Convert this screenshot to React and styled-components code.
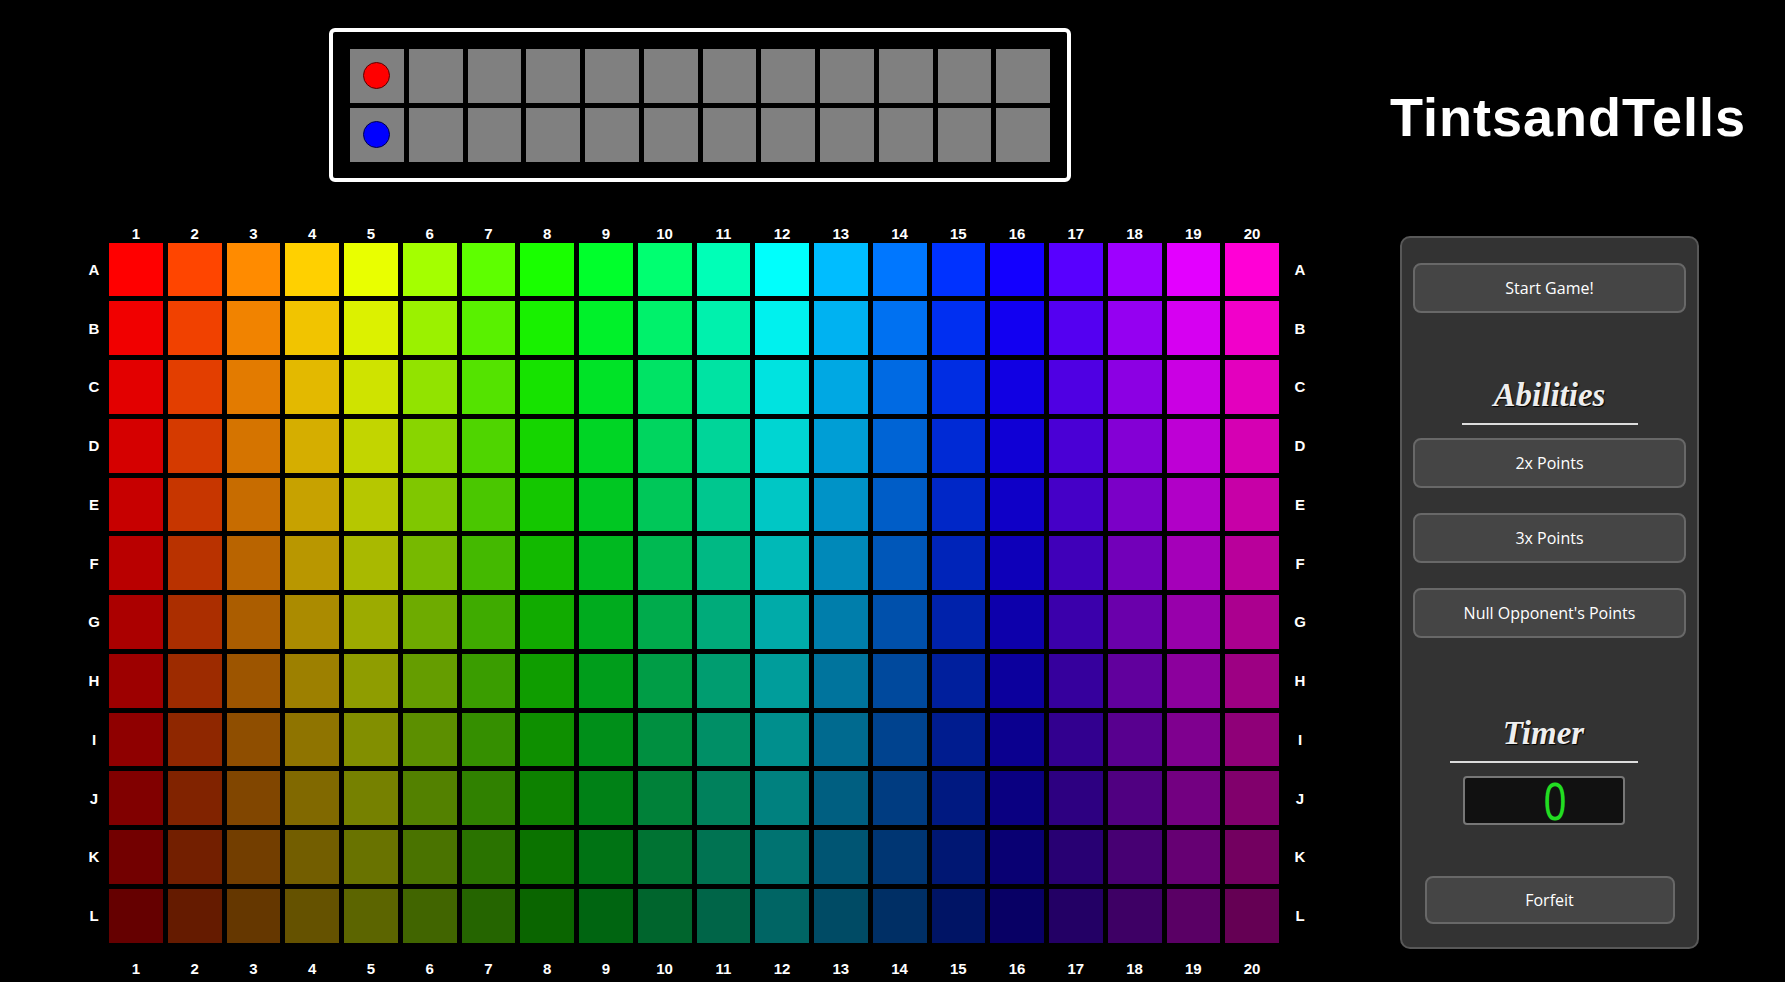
import React from "react";
import styled, { createGlobalStyle } from "styled-components";

const ROWS = "ABCDEFGHIJKL".split("");
const COLS = Array.from({ length: 20 }, (_, i) => i + 1);
const SLOTS = Array.from({ length: 11 }, (_, i) => i);

// hue walks the wheel across columns, each row gets a little darker
const tint = (row, col) => {
  const hue = (col - 1) * 16.3;
  const value = 1 - row * 0.055;
  return `hsl(${hue}, 100%, ${value * 50}%)`;
};

const App = () => {
  return (
    <>
      <GlobalStyle />
      <Page>
        <Main>
          <Board>
            <Slot>
              <Token $color="#ff0000" $edge="#5a0000" />
            </Slot>
            {SLOTS.map((i) => (
              <Slot key={"r" + i} />
            ))}
            <Slot>
              <Token $color="#0000ff" $edge="#00004a" />
            </Slot>
            {SLOTS.map((i) => (
              <Slot key={"b" + i} />
            ))}
          </Board>

          <Palette>
            <span />
            {COLS.map((c) => (
              <ColLabel key={"t" + c}>{c}</ColLabel>
            ))}
            <span />
            {ROWS.map((r, ri) => (
              <React.Fragment key={r}>
                <RowLabel>{r}</RowLabel>
                {COLS.map((c) => (
                  <Swatch key={r + c} style={{ background: tint(ri, c) }} />
                ))}
                <RowLabel>{r}</RowLabel>
              </React.Fragment>
            ))}
            <span />
            {COLS.map((c) => (
              <ColLabel key={"f" + c} $bottom>
                {c}
              </ColLabel>
            ))}
            <span />
          </Palette>
        </Main>

        <Side>
          <Title>TintsandTells</Title>
          <Panel>
            <Button>Start Game!</Button>

            <Heading $top={62}>Abilities</Heading>
            <Rule $width={176} />
            <Button $top={13}>2x Points</Button>
            <Button $top={25}>3x Points</Button>
            <Button $top={25}>Null Opponent's Points</Button>

            <TimerBlock>
              <Heading $top={0}>Timer</Heading>
              <Rule $width={188} />
              <Clock>
                <Digit>0</Digit>
              </Clock>
            </TimerBlock>

            <Button $top={51} $width={250} $height={48}>
              Forfeit
            </Button>
          </Panel>
        </Side>
      </Page>
    </>
  );
};

const GlobalStyle = createGlobalStyle`
  html, body {
    margin: 0;
    background: #000;
    overflow: hidden;
  }
  body {
    font-family: "Liberation Sans", Arial, sans-serif;
  }
`;

const Page = styled.div`
  display: flex;
  align-items: flex-start;
  gap: 84px;
  padding: 28px 0 0 84px;
  min-height: 100vh;
  box-sizing: border-box;
`;

const Main = styled.main`
  display: flex;
  flex-direction: column;
  align-items: center;
  gap: 44px;
`;

const Board = styled.div`
  display: grid;
  grid-template-columns: repeat(12, 53.75px);
  grid-auto-rows: 53.75px;
  gap: 5px;
  padding: 17px 17px 16px;
  border: 4px solid #fff;
  border-radius: 6px;
  background: #000;
`;

const Slot = styled.div`
  display: flex;
  align-items: center;
  justify-content: center;
  background: #808080;
`;

const Token = styled.span`
  width: 27px;
  height: 27px;
  box-sizing: border-box;
  border-radius: 50%;
  background: ${(p) => p.$color};
  border: 1px solid ${(p) => p.$edge};
`;

const Palette = styled.div`
  display: grid;
  grid-template-columns: 20px repeat(20, 53.75px) 32px;
  grid-template-rows: 12px repeat(12, 53.75px) auto;
  gap: 5px;
  color: #fff;
  font-size: 15px;
  font-weight: 700;
`;

const ColLabel = styled.span`
  align-self: start;
  line-height: 15px;
  text-align: center;
  margin-top: ${(p) => (p.$bottom ? "13px" : "0")};
`;

const RowLabel = styled.span`
  align-self: center;
  line-height: 15px;
  text-align: center;
`;

const Swatch = styled.div``;

const Side = styled.aside`
  display: flex;
  flex-direction: column;
  align-items: flex-start;
  width: 299px;
`;

const Title = styled.h1`
  margin: 62px 0 0 -10px;
  color: #fff;
  font-size: 54px;
  line-height: 54px;
  font-weight: 700;
  letter-spacing: 1px;
  white-space: nowrap;
`;

const Panel = styled.section`
  box-sizing: border-box;
  width: 299px;
  margin-top: 92px;
  padding: 25px 11px 23px;
  display: flex;
  flex-direction: column;
  align-items: center;
  background: #333;
  border: 2px solid #585858;
  border-radius: 10px;
`;

const Button = styled.button`
  box-sizing: border-box;
  width: ${(p) => (p.$width ? p.$width + "px" : "100%")};
  height: ${(p) => p.$height || 50}px;
  margin-top: ${(p) => p.$top || 0}px;
  flex-shrink: 0;
  background: #454545;
  border: 2px solid #686868;
  border-radius: 8px;
  color: #fff;
  font-family: "Open Sans", "Noto Sans", sans-serif;
  font-size: 16px;
  cursor: pointer;
`;

const Heading = styled.h2`
  margin: ${(p) => p.$top}px 0 0;
  color: #eee;
  font-family: "Liberation Serif", "Times New Roman", serif;
  font-style: italic;
  font-weight: 700;
  font-size: 33px;
  line-height: 40px;
  text-shadow: 1px 1px 1px #000;
`;

const Rule = styled.div`
  width: ${(p) => p.$width}px;
  height: 2px;
  margin-top: 8px;
  background: #ddd;
`;

const TimerBlock = styled.div`
  display: flex;
  flex-direction: column;
  align-items: center;
  margin: 75px 12px 0 0;
`;

const Clock = styled.div`
  box-sizing: border-box;
  display: flex;
  align-items: center;
  justify-content: center;
  width: 162px;
  height: 49px;
  margin-top: 13px;
  padding-left: 24px;
  background: #111;
  border: 2px solid #777;
  border-radius: 4px;
`;

const Digit = styled.span`
  display: block;
  color: #22dd22;
  font-size: 54px;
  line-height: 44px;
  height: 44px;
  transform: scaleX(0.75);
`;

export default App;
